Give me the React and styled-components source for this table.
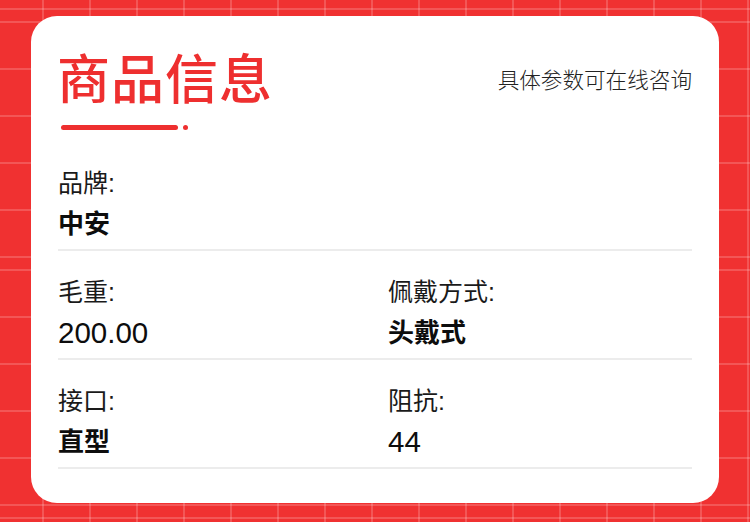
import React from 'react'
import styled, { createGlobalStyle } from 'styled-components'

const GlobalStyle = createGlobalStyle`
  html, body {
    margin: 0;
    padding: 0;
  }
  body {
    font-family: "Liberation Sans", "Noto Sans CJK SC", sans-serif;
    color: #111;
  }
`

const specs = [
  [{ label: '品牌:', value: '中安', bold: true }],
  [
    { label: '毛重:', value: '200.00', num: true },
    { label: '佩戴方式:', value: '头戴式', bold: true }
  ],
  [
    { label: '接口:', value: '直型', bold: true },
    { label: '阻抗:', value: '44', num: true }
  ]
]

function App() {
  return (
    <Page>
      <GlobalStyle />
      <Card>
        <Header>
          <Title>商品信息</Title>
          <Subtitle>具体参数可在线咨询</Subtitle>
        </Header>
        <Underline>
          <Bar />
          <Dot />
        </Underline>
        {specs.map((row, i) => (
          <Row key={i}>
            {row.map((f) => (
              <Field key={f.label}>
                <Label>{f.label}</Label>
                <Value bold={f.bold} num={f.num}>{f.value}</Value>
              </Field>
            ))}
          </Row>
        ))}
      </Card>
    </Page>
  )
}

const Page = styled.div`
  box-sizing: border-box;
  width: 750px;
  height: 522px;
  padding: 16px 31px 19px;
  background-color: #f03131;
  background-image:
    linear-gradient(to right, rgba(255, 255, 255, 0.18) 0 1.5px, transparent 1.5px),
    repeating-linear-gradient(to bottom, rgba(255, 255, 255, 0.18) 0 1.5px, transparent 1.5px 47px);
  background-size: 47px 100%, 100% 248px;
  background-position: 42px 0, 0 21px;
`

const Card = styled.div`
  box-sizing: border-box;
  height: 487px;
  padding: 34px 27px 0;
  background: #fff;
  border-radius: 26px;
`

const Header = styled.div`
  display: flex;
  justify-content: space-between;
  align-items: flex-start;
`

const Title = styled.h1`
  margin: 0 0 0 -1px;
  font-family: "Noto Sans CJK SC", sans-serif;
  font-size: 53px;
  font-weight: 500;
  line-height: 53px;
  letter-spacing: 1px;
  color: #ee2f2f;
`

const Subtitle = styled.div`
  margin-top: 18px;
  font-family: "Noto Sans CJK SC", sans-serif;
  font-size: 21.6px;
  font-weight: 300;
  line-height: 22px;
  color: #222;
`

const Underline = styled.div`
  display: flex;
  align-items: center;
  gap: 5px;
  margin: 22px 0 12px 3px;
`

const Bar = styled.div`
  width: 117px;
  height: 5px;
  border-radius: 3px;
  background: #ee2f2f;
`

const Dot = styled.div`
  width: 5px;
  height: 5px;
  border-radius: 50%;
  background: #ee2f2f;
`

const Row = styled.div`
  display: grid;
  grid-template-columns: 330px 1fr;
  padding: 29px 0 11px;
  border-bottom: 2px solid #ececec;
`

const Field = styled.div`
  display: flex;
  flex-direction: column;
  gap: 15px;
`

const Label = styled.div`
  font-size: 25px;
  line-height: 24px;
  height: 24px;
  color: #1a1a1a;
`

const Value = styled.div`
  font-size: ${(p) => (p.num ? '29.5px' : '26px')};
  line-height: 28px;
  height: 28px;
  font-weight: ${(p) => (p.bold ? 700 : 400)};
  color: #0d0d0d;
`

export default App
